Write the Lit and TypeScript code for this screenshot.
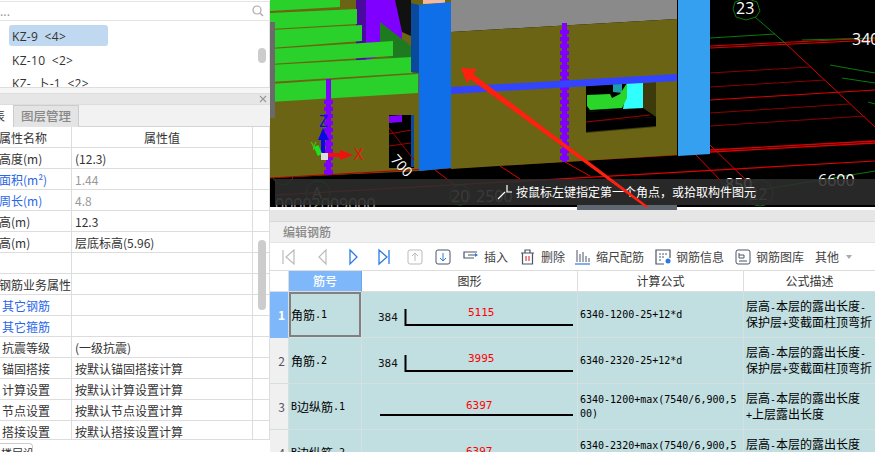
import { LitElement, html, css, svg } from "lit";
import { customElement } from "lit/decorators.js";

const attrs: [string, string, number, string?, string?][] = [
  ["高度(m)", "(12.3)", -1],
  ["面积(m²)", "1.44", -1, "blue", "gray"],
  ["周长(m)", "4.8", -1, "blue", "gray"],
  ["高(m)", "12.3", -1],
  ["高(m)", "层底标高(5.96)", -1],
  ["", "", 0],
  ["钢筋业务属性", "", -1],
  ["其它钢筋", "", 2, "blue"],
  ["其它箍筋", "", 2, "blue"],
  ["抗震等级", "(一级抗震)", 2],
  ["锚固搭接", "按默认锚固搭接计算", 2],
  ["计算设置", "按默认计算设置计算", 2],
  ["节点设置", "按默认节点设置计算", 2],
  ["搭接设置", "按默认搭接设置计算", 2],
];

const ink = "#4a5568";
const blue = "#2a7be0";
const gr = "#bbb";

const tools = [
  { w: 34, icon: svg`<path d="M1 2v14M12 2 4 9l8 7z" fill="none" stroke="${gr}" stroke-width="1.2"/>` },
  { w: 31, icon: svg`<path d="M10 2 3 9l7 7z" fill="none" stroke="${gr}" stroke-width="1.2"/>` },
  { w: 31, icon: svg`<path d="M3 2l7 7-7 7z" fill="none" stroke="${blue}" stroke-width="1.3"/>` },
  { w: 29, icon: svg`<path d="M1 2l8 7-8 7zM11 2v14" fill="none" stroke="${blue}" stroke-width="1.3"/>` },
  { w: 28, icon: svg`<rect x="1" y="2" width="14" height="14" rx="2" fill="none" stroke="${gr}"/><path d="M8 13V5M5 8l3-3 3 3" fill="none" stroke="${gr}"/>` },
  { w: 28, icon: svg`<rect x="1" y="2" width="14" height="14" rx="2" fill="none" stroke="${ink}"/><path d="M8 5v8M5 10l3 3 3-3" fill="none" stroke="${blue}"/>` },
  { w: 57, label: "插入", icon: svg`<path d="M14 4H1v6h10M14 7H5" fill="none" stroke="${ink}" stroke-width="1.2"/><path d="M12 5l3 2-3 2z" fill="${blue}"/>` },
  { w: 55, label: "删除", icon: svg`<path d="M1 5h13M5 5V2h5v3M2.500 5v11h10V5" fill="none" stroke="${ink}" stroke-width="1.2"/><path d="M6 8v5M9 8v5" stroke="#e04040" stroke-width="1.200"/>` },
  { w: 80, label: "缩尺配筋", icon: svg`<path d="M2 2v12M5 6v8M8 4v10M11 8v6M14 10v4" stroke="${ink}"/><path d="M0 16h15" stroke="${blue}" stroke-width="1.200"/>` },
  { w: 80, label: "钢筋信息", icon: svg`<path d="M9 16H1V2h14v8" fill="none" stroke="${ink}" stroke-width="1.2"/><path d="M4 6h8M4 9h6M4 12h3" stroke="${ink}" stroke-dasharray="2 1"/><circle cx="13" cy="13" r="2.500" fill="${blue}"/>` },
  { w: 80, label: "钢筋图库", icon: svg`<rect x="1" y="2" width="14" height="14" rx="2" fill="none" stroke="${ink}"/><path d="M4 5v5M4 7h5v3H4M4 13h8" fill="none" stroke="${ink}"/>` },
];

const heads: [string, string][] = [["", "c0"], ["筋号", "c1"], ["图形", ""], ["计算公式", ""], ["公式描述", "last"]];

const rows = [
  { n: "1", name: "角筋.1", formula: "6340-1200-25+12*d", desc: "层高-本层的露出长度-\n保护层+变截面柱顶弯折", num: "5115", hook: true, sel: true },
  { n: "2", name: "角筋.2", formula: "6340-2320-25+12*d", desc: "层高-本层的露出长度-\n保护层+变截面柱顶弯折", num: "3995", hook: true, sel: false },
  { n: "3", name: "B边纵筋.1", formula: "6340-1200+max(7540/6,900,500)", desc: "层高-本层的露出长度\n+上层露出长度", num: "6397", hook: false, sel: false },
  { n: "4", name: "B边纵筋.2", formula: "6340-2320+max(7540/6,900,500)", desc: "层高-本层的露出长度\n+上层露出长度", num: "6397", hook: false, sel: false },
];

function mixed(t: string) {
  return t.split(/([\x00-\x7f]+)/).filter(Boolean).map((p) =>
    /^[\x00-\x7f]/.test(p) ? html`<span class="lat">${p}</span>` : html`<span>${p}</span>`);
}

function shape(r: (typeof rows)[number]) {
  return html`<svg class="shape" width="215" height="46" viewBox="0 0 215 46">
    ${r.hook
      ? svg`<text class="sn" x="16" y="29" fill="#111">384</text>
            <path d="M43.500 17V33H211" fill="none" stroke="#000" stroke-width="2"/>
            <text class="sn" x="106" y="24" fill="#f00">${r.num}</text>`
      : svg`<path d="M18 31H211" stroke="#000" stroke-width="2"/>
            <text class="sn" x="104" y="25" fill="#f00">${r.num}</text>`}
  </svg>`;
}

const scene = svg`
  <rect x="270" y="0" width="605" height="210" fill="#000"/>
  <g fill="none" stroke-width="1">
    <g stroke="#e00000">
      <path d="M710 46 875 38M710 48 875 40" />
      <path d="M710 100 875 90"/>
      <path d="M710 152 875 143M710 150 875 141" stroke-width="1.3"/>
      <path d="M275 195 875 161" stroke-width="1.2"/>
      <path d="M785 43 875 127M710 145 748 182M696 155 722 182"/>
      <path d="M435 170 455 185M500 166 520 179M565 162 590 176"/>
    </g>
    <g stroke="#8a0000">
      <path d="M710 73 810 67M710 87 825 80M710 113 850 104M710 126 865 116"/>
    </g>
    <g stroke="#0a7a0a">
      <path d="M710 38 775 34M755 17 785 43M802 40 875 38M830 65 875 73M842 78 875 83M868 102 875 104M722 182 745 197M760 190 875 171"/>
      <path d="M735 2 746 -2 757 2 760 11 756 17 746 20 736 17 733 9z"/>
    </g>
  </g>
  <text class="t" x="736" y="14" fill="#fff">23</text>
  <text class="t" x="852" y="45" fill="#fff">340</text>
  <text class="t" x="818" y="186" fill="#fff">6600</text>
  <text class="t" x="725" y="190" fill="#fff">850</text>
  <text class="t" x="451" y="202" fill="#999">20</text>
  <text class="t" x="476" y="202" fill="#999">2500</text>
  <text class="t" x="275" y="210" fill="#999">00002009000</text>
  <text class="t" x="312" y="199" fill="#888">A</text>
  <text class="t" x="749" y="200" fill="#888">22</text>
  <g fill="none" stroke="#0a6a0a">
    <circle cx="318" cy="193" r="12"/><circle cx="760" cy="193" r="13"/><circle cx="283" cy="175" r="10"/><circle cx="460" cy="195" r="10"/>
  </g>

  <polygon points="270,0 451,0 451,168 419,171 270,178" fill="#6b6414"/>
  <path d="M270 178 677 155" stroke="#b00000" fill="none" stroke-width="1.2"/>
  <polygon points="451,0 677,0 677,19 451,32" fill="#8a8a8a"/>
  <polygon points="451,32 677,19 677,155 451,169" fill="#6b6414"/>
  <polygon points="356,0 366,0 366,60 356,60" fill="#4a0aa0"/>
  <polygon points="366,0 402,0 402,50 366,60" fill="#8000ff"/>
  <polygon points="395,0 411,0 411,36 402,32" fill="#111"/>
  <polygon points="380,22 411,46 411,60 380,56" fill="#1e7a1e"/>
  <polygon points="270,0 340,0 340,7 270,11" fill="#2ad12a"/>
  <polygon points="270,13 357,9 357,24 270,29" fill="#2ad12a"/>
  <polygon points="270,30 362,25 362,41 270,48" fill="#2ad12a"/>
  <polygon points="270,49 393,41 393,56 270,64" fill="#2ad12a"/>
  <polygon points="270,65 412,57 412,73 270,82" fill="#2ad12a"/>
  <polygon points="270,84 418,74 418,93 270,102" fill="#2ad12a"/>
  <rect x="326" y="79" width="5" height="96" fill="#8000ff"/>
  <path d="M328.500 100V175" stroke="#8000ff" stroke-width="9" stroke-dasharray="4 3"/>
  <rect x="562" y="23" width="5" height="139" fill="#8000ff"/>
  <path d="M564.500 30V162" stroke="#8000ff" stroke-width="9" stroke-dasharray="4 3"/>

  <polygon points="389,115 414,115 414,168 389,168" fill="#000"/>
  <polygon points="389,116 402,115 402,122 389,123" fill="#8000ff"/>
  <polygon points="411,115 414,115 414,167 411,167" fill="#0a4a9c"/>
  <path d="M389 128 414 160M389 134 411 130M389 146 411 143" stroke="#a00000" fill="none"/>

  <polygon points="586,86 656,82 656,127 586,133" fill="#3d3a0c"/>
  <polygon points="586,86 643,82 643,108 586,112" fill="#000"/>
  <polygon points="586,112 643,108 656,117 586,122" fill="#000"/>
  <polygon points="586,122 656,117 656,126 586,132" fill="#000"/>
  <polygon points="613,83 622,83 622,93 613,92" fill="#1aa0a8"/>
  <polygon points="627,83 643,82 643,108 623,109" fill="#30ffff"/>
  <polygon points="587,95 610,94 612,98 620,94 627,83 627,98 622,108 590,110 587,106" fill="#2bd62b"/>
  <path d="M586 122 650 115" stroke="#a00000"/>
  <polygon points="451,87 677,74 677,81 451,94" fill="#3344ff"/>

  <polygon points="411,3 419,5 419,73 411,72" fill="#0a4a9c"/>
  <polygon points="423,0 445,0 445,3 423,4" fill="#f5b8a0"/>
  <polygon points="419,5 451,2 451,168 419,171" fill="#0f6fe8"/>
  <polygon points="678,0 710,0 710,154 678,156" fill="#36a0f0"/>

  <path d="M323 154V138" stroke="#0a0ae0" stroke-width="4"/>
  <polygon points="318,140 323,128 329,140" fill="#0a0ae0"/>
  <path d="M316 146 320 155" stroke="#1fe01f" stroke-width="5"/>
  <path d="M328 155H342" stroke="#f01010" stroke-width="4"/>
  <polygon points="340,150 353,155 340,160" fill="#f01010"/>
  <rect x="321" y="153" width="7" height="7" fill="#ddd"/>
  <text class="ax" x="319" y="127" fill="#0a0ae0">Z</text>
  <text class="ax" x="354" y="160" fill="#f01010">X</text>
  <text class="ax2" x="311" y="150" fill="#1fe01f">Y</text>
  <text class="t" transform="translate(390 160) rotate(48)" fill="#fff" style="font-size:14px">700</text>
`;

const arrow = svg`
  <polygon points="461,68 477,69 473,74 649,207 645,207 470,79 467,83" fill="#ff2010"/>
`;

@customElement("app-root")
export class AppRoot extends LitElement {
  static styles = css`
    :host { display: grid; grid-template-columns: 270px 605px; width: 875px; height: 452px; overflow: hidden; background: #fff;
      font-family: "Noto Sans CJK SC", "Open Sans", sans-serif; font-size: 12px; color: #333; line-height: 1; }
    .left { display: flex; flex-direction: column; height: 452px; overflow: hidden; }
    .search { height: 18px; flex: none; margin-top: 1px; border-top: 1px solid #e4e4e4; border-bottom: 1px solid #e4e4e4; display: flex; align-items: center; justify-content: space-between; padding: 0 5px 0 0; color: #999; border-right: 1px solid #e4e4e4; }
    .list { height: 67px; flex: none; position: relative; border-right: 1px solid #e4e4e4; border-bottom: 1px solid #ddd; box-sizing: border-box; padding: 4px 0 0 9px; overflow: hidden; display: flex; flex-direction: column; gap: 2.500px; }
    .item { width: 99px; height: 21px; flex: none; display: flex; align-items: center; padding: 3px 0 0 3px; box-sizing: border-box; border-radius: 3px; font-family: "Open Sans", "Noto Sans CJK SC", sans-serif; word-spacing: 3px; letter-spacing: .3px; white-space: pre; }
    .item.sel { background: #c0d8f0; }
    .thumb { position: absolute; right: 3px; width: 8px; border-radius: 4px; background: #ccc; }
    .gapbar { height: 5px; background: #f6f6f6; flex: none; }
    .title { flex: none; background: #e6e6e6; border-top: 1px solid #ddd; border-bottom: 1px solid #ddd; height: 10px; display: flex; justify-content: flex-end; align-items: center; padding-right: 3px; }
    .tabs { height: 22px; flex: none; display: flex; background: #f2f2f2; border-bottom: 1px solid #d4d4d4; box-sizing: border-box; }
    .tab { height: 22px; box-sizing: border-box; display: flex; align-items: center; justify-content: center; }
    .tab.a { width: 14px; background: #fff; border-right: 1px solid #ccc; overflow: hidden; justify-content: flex-start; }
    .tab.a span { margin-left: -7px; flex: none; }
    .tab.b { width: 65px; background: #e4e4e4; border-right: 1px solid #ccc; border-top: 1px solid #ccc; color: #888; font-weight: 500; font-size: 12.500px; }
    .ptable { height: 312px; flex: none; position: relative; overflow: hidden; border-right: 1px solid #ddd; border-bottom: 1px solid #ddd; box-sizing: content-box; width: 269px; }
    .prow { display: grid; grid-template-columns: 72px 181px 16px; height: 21px; box-sizing: border-box; border-bottom: 1px solid #ddd; }
    .pc { border-right: 1px solid #ddd; display: flex; align-items: center; white-space: nowrap; overflow: hidden; height: 100%; box-sizing: border-box; padding-top: 2px; }
    .pc.val { padding-left: 3px; }
    .pc.last { border-right: none; }
    .pc.head { justify-content: center; }
    .pc.first { justify-content: flex-start; }
    .pc span { flex: none; }
    .blue { color: #2a66e8; }
    .gray { color: #999; }
    .bottomtab { flex: none; width: 33px; height: 10px; margin-top: 3px; border: 1px solid #ccc; border-left: none; border-bottom: none; border-radius: 0 4px 0 0; box-sizing: border-box; font-size: 11px; overflow: hidden; padding-top: 4px; padding-left: 1px; white-space: nowrap; }

    .right { display: flex; flex-direction: column; height: 452px; overflow: hidden; }
    .view { height: 210px; flex: none; position: relative; background: #fff; overflow: hidden; }
    .view svg.scene { position: absolute; left: 0; top: 0; display: block; }
    .t { font: 16px "Open Sans", sans-serif; }
    .ax { font: 16px "Open Sans", sans-serif; }
    .ax2 { font: 10px "Open Sans", sans-serif; }
    .status { position: absolute; left: 5px; right: 0; top: 179px; height: 26px; background: rgba(46,46,46,.88); display: flex; align-items: center; color: #fff; padding-left: 222px; box-sizing: border-box; font-size: 12px; white-space: nowrap; gap: 3px; }
    .strip { position: absolute; left: 0; top: 22px; width: 5px; height: 96px; background: #6a6a6a; }
    .whitefoot { position: absolute; left: 0; right: 0; top: 207px; height: 3px; background: #fff; }
    .collapse { position: absolute; left: 307px; top: 205px; width: 100px; height: 5px; background: #5f6770; }
    .over { position: absolute; left: 0; top: 0; display: block; }
    .band { height: 12px; flex: none; background: #e6e6e6; border-bottom: 1px solid #d8d8d8; box-sizing: border-box; }
    .etitle { height: 21px; flex: none; background: #f0f0f0; color: #888; display: flex; align-items: center; padding-left: 13px; font-weight: 500; border-bottom: 1px solid #e4e4e4; box-sizing: border-box; }
    .toolbar { height: 28px; flex: none; display: flex; align-items: center; padding-left: 12px; border-bottom: 1px solid #ddd; box-sizing: border-box; color: #444; background: #fff; }
    .tool { display: flex; align-items: center; gap: 5px; flex: none; white-space: nowrap; }
    .tool svg { flex: none; }
    .other { display: flex; align-items: center; gap: 7px; }
    .caret { width: 0; height: 0; border: 3.500px solid transparent; border-top: 4px solid #aaa; border-bottom: 0; }
    .rtable { flex: 1; display: grid; grid-template-columns: 19px 73px 216px 166px 131px; grid-template-rows: 21px; grid-auto-rows: 46px; align-content: start; overflow: hidden; }
    .hd { display: flex; align-items: center; justify-content: center; border-right: 1px solid #ddd; border-bottom: 1px solid #ddd; box-sizing: border-box; color: #333; }
    .hd.c0 { background: #fff; }
    .hd.c1 { background: #7fb8fa; color: #fff; font-weight: 500; border-right: 1px solid #6aa8ee; }
    .hd.last { border-right: none; }
    .cell { background: #c1dee0; border-right: 1px solid #d6e0e0; border-bottom: 1px solid #d6e0e0; box-sizing: border-box; display: flex; align-items: center; overflow: hidden; color: #000; }
    .num { background: #f0f0f0; justify-content: center; color: #556; font-size: 12px; padding-left: 5px; }
    .num.on { background: #7fb8fa; color: #fff; font-weight: 700; border-bottom-color: #7fb8fa; }
    .name { padding-left: 2px; white-space: nowrap; }
    .name.on { box-shadow: inset 0 0 0 2px #808080; }
    .form { padding: 0 6px 0 2px; word-break: break-all; line-height: 14px; }
    .desc { padding-left: 2px; white-space: pre-wrap; line-height: 14px; border-right: none; font-size: 12px; }
    .lat { font-family: "DejaVu Sans Mono", "Liberation Mono", monospace; font-size: 10px; }
    .shape { display: block; flex: none; }
    .sn { font: 11px "DejaVu Sans Mono", monospace; }
    .fwrap { display: block; }
  `;

  render() {
    return html`
      <div class="left">
        <div class="search">
          <span>...</span>
          <svg width="12" height="12" viewBox="0 0 12 12"><circle cx="5" cy="5" r="4" fill="none" stroke="#aaa" stroke-width="1.200"/><path d="M8 8l3 3" stroke="#aaa" stroke-width="1.400"/></svg>
        </div>
        <div class="list">
          <div class="item sel">KZ-9 &lt;4&gt;</div>
          <div class="item">KZ-10 &lt;2&gt;</div>
          <div class="item">KZ- 卜-1 &lt;2&gt;</div>
          <div class="thumb" style="top:27px;height:15px"></div>
        </div>
        <div class="gapbar"></div>
        <div class="title">
          <svg width="8" height="8" viewBox="0 0 8 8"><path d="M1 1l6 6M7 1 1 7" stroke="#999" stroke-width="1.100"/></svg>
        </div>
        <div class="tabs">
          <div class="tab a"><span>表</span></div>
          <div class="tab b">图层管理</div>
        </div>
        <div class="ptable">
          <div class="prow">
            <div class="pc first"><span style="margin-left:-1px">属性名称</span></div>
            <div class="pc head"><span>属性值</span></div>
            <div class="pc last"></div>
          </div>
          ${attrs.map(([n, v, ind, nc, vc]) => html`
            <div class="prow">
              <div class="pc first ${nc ?? ""}"><span style="margin-left:${ind}px">${n}</span></div>
              <div class="pc val ${vc ?? ""}">${v}</div>
              <div class="pc last"></div>
            </div>`)}
          <div class="thumb" style="top:113px;height:70px"></div>
        </div>
        <div class="bottomtab">楼层设</div>
      </div>
      <div class="right">
        <div class="view">
          <svg class="scene" width="605" height="210" viewBox="270 0 605 210">${scene}</svg>
          <div class="status"><svg width="16" height="16" viewBox="0 0 16 16"><path d="M1 15 8 8M10 1V8H15" fill="none" stroke="#fff" stroke-width="1.200"/></svg><span>按鼠标左键指定第一个角点，或拾取构件图元</span></div>
          <div class="whitefoot"></div>
          <div class="collapse"></div>
          <svg class="over" width="605" height="210" viewBox="270 0 605 210">${arrow}</svg>
          <div class="strip"></div>
        </div>
        <div class="band"></div>
        <div class="etitle">编辑钢筋</div>
        <div class="toolbar">
          ${tools.map((t) => html`
            <div class="tool" style="width:${t.w}px">
              <svg width="16" height="18" viewBox="0 0 16 18">${t.icon}</svg>
              ${t.label ? html`<span>${t.label}</span>` : ""}
            </div>`)}
          <div class="other"><span>其他</span><span class="caret"></span></div>
        </div>
        <div class="rtable">
          ${heads.map(([h, c]) => html`<div class="hd ${c}">${h}</div>`)}
          ${rows.map((r) => html`
            <div class="cell num ${r.sel ? "on" : ""}">${r.n}</div>
            <div class="cell name ${r.sel ? "on" : ""}">${mixed(r.name)}</div>
            <div class="cell">${shape(r)}</div>
            <div class="cell form"><span class="lat fwrap">${r.formula}</span></div>
            <div class="cell desc"><div>${mixed(r.desc)}</div></div>
          `)}
        </div>
      </div>
    `;
  }
}
